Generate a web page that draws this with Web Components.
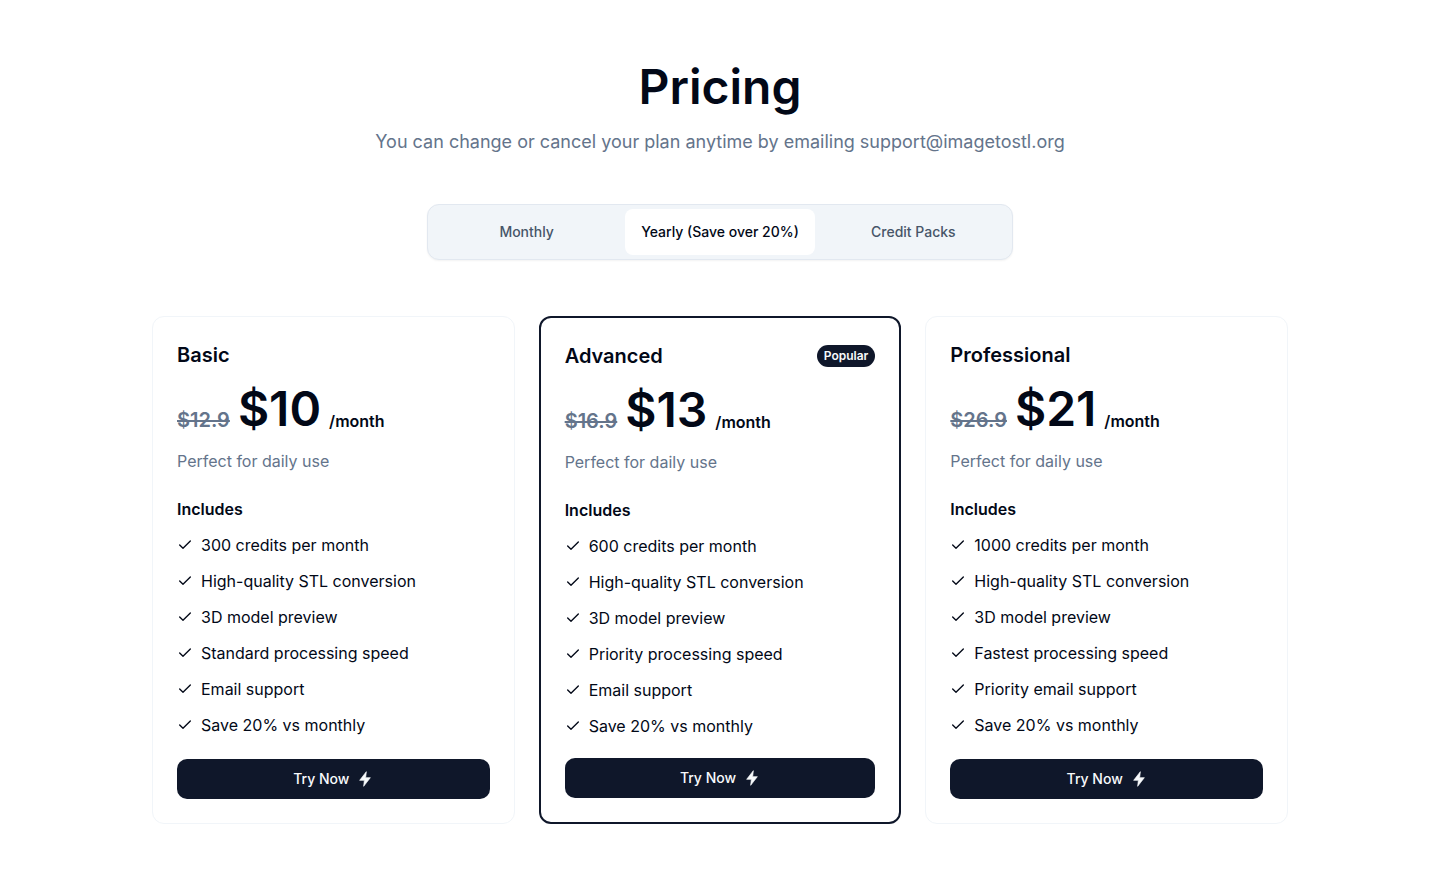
<!doctype html>
<html lang="en">
<head>
<meta charset="utf-8">
<title>Pricing</title>
<style>
  html,body{margin:0;background:#fff}
  body{font-family:Inter,"Noto Sans",sans-serif;color:#020817}
</style>
</head>
<body>
<pricing-page>
  <pricing-header slot="header"></pricing-header>
  <plan-tabs slot="tabs"></plan-tabs>
  <plan-card name="Basic" old="$12.9" price="$10">
    <plan-feature>300 credits per month</plan-feature>
    <plan-feature>High-quality STL conversion</plan-feature>
    <plan-feature>3D model preview</plan-feature>
    <plan-feature>Standard processing speed</plan-feature>
    <plan-feature>Email support</plan-feature>
    <plan-feature>Save 20% vs monthly</plan-feature>
  </plan-card>
  <plan-card name="Advanced" old="$16.9" price="$13" popular>
    <plan-feature>600 credits per month</plan-feature>
    <plan-feature>High-quality STL conversion</plan-feature>
    <plan-feature>3D model preview</plan-feature>
    <plan-feature>Priority processing speed</plan-feature>
    <plan-feature>Email support</plan-feature>
    <plan-feature>Save 20% vs monthly</plan-feature>
  </plan-card>
  <plan-card name="Professional" old="$26.9" price="$21">
    <plan-feature>1000 credits per month</plan-feature>
    <plan-feature>High-quality STL conversion</plan-feature>
    <plan-feature>3D model preview</plan-feature>
    <plan-feature>Fastest processing speed</plan-feature>
    <plan-feature>Priority email support</plan-feature>
    <plan-feature>Save 20% vs monthly</plan-feature>
  </plan-card>
</pricing-page>

<script>
(() => {
  const shadow = (el, html) => { el.attachShadow({ mode: "open" }).innerHTML = html; };

  class PricingPage extends HTMLElement {
    connectedCallback() {
      if (this.shadowRoot) return;
      shadow(this, `
        <style>
          :host{display:block;box-sizing:border-box;width:1136px;margin:0 auto;padding-top:57px}
          .cards{display:grid;grid-template-columns:repeat(3,minmax(0,1fr));gap:24px;margin-top:56px}
        </style>
        <slot name="header"></slot>
        <slot name="tabs"></slot>
        <div class="cards"><slot></slot></div>`);
    }
  }

  class PricingHeader extends HTMLElement {
    connectedCallback() {
      if (this.shadowRoot) return;
      shadow(this, `
        <style>
          :host{display:block;text-align:center}
          h1{margin:0;font-size:48px;line-height:60px;font-weight:600;color:#020817}
          p{margin:11px 0 0;font-size:18px;line-height:28px;color:#64748b}
        </style>
        <h1>Pricing</h1>
        <p>You can change or cancel your plan anytime by emailing support@imagetostl.org</p>`);
    }
  }

  class PlanTabs extends HTMLElement {
    connectedCallback() {
      if (this.shadowRoot) return;
      shadow(this, `
        <style>
          :host{display:block;margin-top:48px}
          .list{box-sizing:border-box;width:586px;height:56px;margin:0 auto;padding:4px;display:grid;grid-template-columns:repeat(3,1fr);gap:4px;
            background:#f1f5f9;border:1px solid #e2e8f0;border-radius:12px;box-shadow:0 1px 2px rgba(0,0,0,.05)}
          .tab{display:flex;align-items:center;justify-content:center;padding-bottom:2px;border-radius:8px;font-size:14px;font-weight:500;color:#475569}
          .on{background:#fff;color:#020817}
        </style>
        <div class="list">
          <div class="tab">Monthly</div>
          <div class="tab on">Yearly (Save over 20%)</div>
          <div class="tab">Credit Packs</div>
        </div>`);
    }
  }

  class PlanCard extends HTMLElement {
    connectedCallback() {
      if (this.shadowRoot) return;
      const popular = this.hasAttribute("popular");
      shadow(this, `
        <style>
          :host{display:flex;box-sizing:border-box;flex-direction:column;padding:24px;border-radius:12px;background:#fff;
            border:${popular ? "2px solid #0f172a" : "1px solid #f1f5f9"};color:#020817}
          .top{display:flex;align-items:center;justify-content:space-between;height:28px}
          h3{margin:0;font-size:20px;line-height:28px;font-weight:600}
          .badge{padding:3px 7px;border-radius:999px;background:#0f172a;color:#f8fafc;font-size:12px;line-height:16px;font-weight:600}
          .price{display:flex;align-items:flex-end;gap:8px;margin-top:16px;height:48px}
          .old{font-size:20px;line-height:26px;font-weight:600;color:#64748b;text-decoration:line-through}
          .now{font-size:48px;line-height:48px;font-weight:600}
          .per{font-size:16px;line-height:24px;font-weight:600}
          .desc{margin-top:16px;font-size:16px;line-height:24px;color:#64748b}
          .inc{margin-top:24px;font-size:16px;line-height:24px;font-weight:600}
          .list{flex:1;display:flex;flex-direction:column;gap:12px;margin:12px 0 20px}
          button{display:flex;align-items:center;justify-content:center;gap:8px;height:40px;border:0;border-radius:10px;padding:0;
            background:#0f172a;color:#f8fafc;font:500 14px Inter,sans-serif}
          button span{margin-bottom:2px}
          svg{width:16px;height:16px;display:block;overflow:visible}
        </style>
        <div class="top"><h3>${this.getAttribute("name")}</h3>${popular ? '<span class="badge">Popular</span>' : ""}</div>
        <div class="price"><span class="old">${this.getAttribute("old")}</span><span class="now">${this.getAttribute("price")}</span><span class="per">/month</span></div>
        <div class="desc">Perfect for daily use</div>
        <div class="inc">Includes</div>
        <div class="list"><slot></slot></div>
        <button><span>Try Now</span> <svg viewBox="0 0 24 24" fill="currentColor" stroke="currentColor" stroke-width="1" stroke-linejoin="round"><path d="M14 1 4 14h7l-1 9 10-13h-7z"/></svg></button>`);
    }
  }

  class PlanFeature extends HTMLElement {
    connectedCallback() {
      if (this.shadowRoot) return;
      shadow(this, `
        <style>
          :host{display:flex;align-items:center;gap:8px;font-size:16px;line-height:24px;color:#020817}
          svg{width:16px;height:16px;flex:none}
        </style>
        <svg viewBox="0 0 24 24" fill="none" stroke="currentColor" stroke-width="2" stroke-linecap="round" stroke-linejoin="round"><path d="M20 6 9 17l-5-5"/></svg>
        <span><slot></slot></span>`);
    }
  }

  customElements.define("pricing-page", PricingPage);
  customElements.define("pricing-header", PricingHeader);
  customElements.define("plan-tabs", PlanTabs);
  customElements.define("plan-card", PlanCard);
  customElements.define("plan-feature", PlanFeature);
})();
</script>
</body>
</html>
